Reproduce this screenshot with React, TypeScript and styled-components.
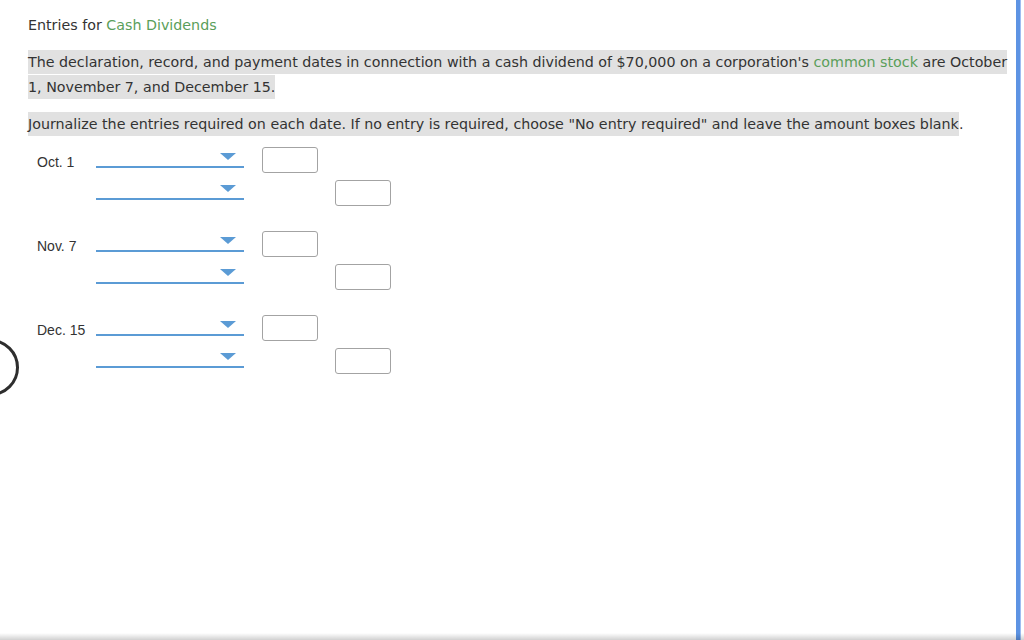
import styled, { createGlobalStyle } from "styled-components"

const GlobalStyle = createGlobalStyle`
	html, body {
		margin: 0;
		padding: 0;
		background: #ffffff;
		overflow: hidden;
	}
	body {
		font-family: "DejaVu Sans", Verdana, sans-serif;
		color: #333333;
	}
`

type Line = { credit?: boolean }
type Entry = { date: string; lines: Line[] }

const entries: Entry[] = [
	{ date: "Oct. 1", lines: [{}, { credit: true }] },
	{ date: "Nov. 7", lines: [{}, { credit: true }] },
	{ date: "Dec. 15", lines: [{}, { credit: true }] },
]

const App = () => {
	return (
		<>
			<GlobalStyle />
			<Frame>
				<Content>
					<Title>
						Entries for <Term>Cash Dividends</Term>
					</Title>

					<Para>
						<Mark>
							The declaration, record, and payment dates in connection with a
							cash dividend of $70,000 on a corporation's{" "}
							<Term>common stock</Term> are October 1, November 7, and December
							15.
						</Mark>
					</Para>

					<Para $space={7}>
						<Mark>
							Journalize the entries required on each date. If no entry is
							required, choose "No entry required" and leave the amount boxes
							blank
						</Mark>
						.
					</Para>

					<Journal>
						{entries.map((entry) => (
							<Group key={entry.date}>
								{entry.lines.map((line, i) => (
									<Row key={i}>
										<DateLabel>{i === 0 ? entry.date : ""}</DateLabel>
										<Select>
											<Caret />
										</Select>
										<Amount $credit={line.credit} />
									</Row>
								))}
							</Group>
						))}
					</Journal>
				</Content>
				<RightBar />
				<BottomShade />
				<Knob />
			</Frame>
		</>
	)
}

export default App

const Frame = styled.div`
	position: relative;
	width: 1024px;
	height: 640px;
	overflow: hidden;
	display: flex;
`

const Content = styled.main`
	width: 982px;
	padding: 13px 0 0 28px;
`

const Title = styled.div`
	font-size: 14.25px;
	line-height: 25px;
	margin-bottom: 12px;
`

const Term = styled.span`
	color: #5a9e5a;
`

const Para = styled.p<{ $space?: number }>`
	margin: 0 0 ${(p) => p.$space ?? 12}px;
	font-size: 14.25px;
	line-height: 25px;
`

const Mark = styled.span`
	background: #e1e1e1;
	padding: 4px 0;
`

const Journal = styled.div`
	display: flex;
	flex-direction: column;
	gap: 20px;
`

const Group = styled.div`
	display: flex;
	flex-direction: column;
`

const Row = styled.div`
	height: 32px;
	display: flex;
	align-items: flex-start;
`

const DateLabel = styled.div`
	width: 59px;
	padding-left: 9px;
	margin-top: 10px;
	font-family: "Liberation Sans", Arial, sans-serif;
	font-size: 14px;
	line-height: 16px;
	color: #333333;
	white-space: nowrap;
`

const Select = styled.div`
	position: relative;
	width: 148px;
	height: 22px;
	border-bottom: 2px solid #5b9bd5;
`

const Caret = styled.span`
	position: absolute;
	right: 8px;
	top: 9px;
	width: 0;
	height: 0;
	border-left: 8px solid transparent;
	border-right: 8px solid transparent;
	border-top: 7px solid #5b9bd5;
`

const Amount = styled.div<{ $credit?: boolean }>`
	box-sizing: border-box;
	width: 56px;
	height: 26px;
	margin-top: ${(p) => (p.$credit ? "4px" : "3px")};
	margin-left: ${(p) => (p.$credit ? "91px" : "18px")};
	border: 1px solid #a3a3a3;
	border-radius: 3px;
	background: #ffffff;
`

const RightBar = styled.div`
	position: absolute;
	top: 0;
	bottom: 0;
	left: 1016px;
	width: 4px;
	background: #5d93e3;
	box-shadow: 1px 0 0 #9fbdf0;
`

const BottomShade = styled.div`
	position: absolute;
	left: 0;
	right: 0;
	bottom: 0;
	height: 7px;
	background: linear-gradient(180deg, rgba(0, 0, 0, 0) 0%, rgba(0, 0, 0, 0.18) 100%);
`

const Knob = styled.div`
	position: absolute;
	left: -38px;
	top: 339px;
	width: 51px;
	height: 51px;
	border: 3px solid #2e2e2e;
	border-radius: 50%;
`
